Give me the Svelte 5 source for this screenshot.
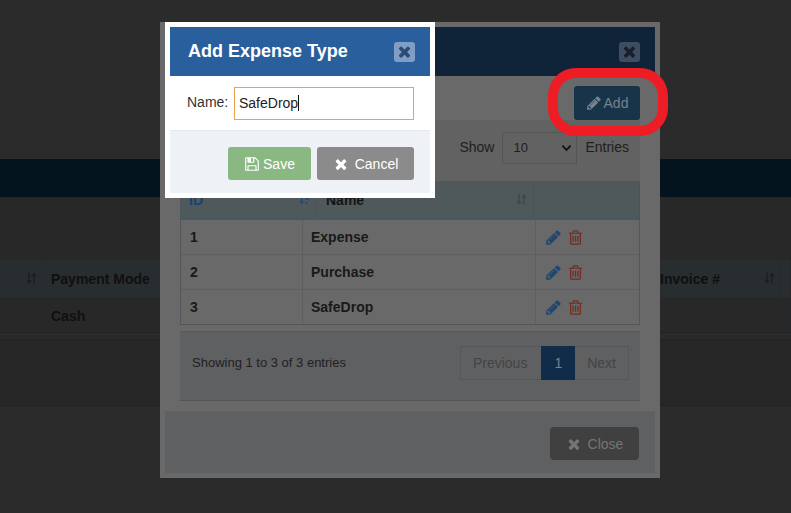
<script>
  const rows = [
    { id: 1, name: 'Expense' },
    { id: 2, name: 'Purchase' },
    { id: 3, name: 'SafeDrop' }
  ];
  const pencil = 'M491 1536l91-91-235-235-91 91v107h128v128h107zm523-928q0-22-22-22-10 0-17 7l-542 542q-7 7-7 17 0 22 22 22 10 0 17-7l542-542q7-7 7-17zm-54-192l416 416-832 832h-416v-416zm683 96q0 53-37 90l-166 166-416-416 166-165q36-38 90-38 53 0 91 38l235 234q37 39 37 91z';
  const times = 'M1490 1322q0 40-28 68l-136 136q-28 28-68 28t-68-28l-294-294-294 294q-28 28-68 28t-68-28l-136-136q-28-28-28-68t28-68l294-294-294-294q-28-28-28-68t28-68l136-136q28-28 68-28t68 28l294 294 294-294q28-28 68-28t68 28l136 136q28 28 28 68t-28 68l-294 294 294 294q28 28 28 68z';
  const trash = 'M704 736v576q0 14-9 23t-23 9h-64q-14 0-23-9t-9-23v-576q0-14 9-23t23-9h64q14 0 23 9t9 23zm256 0v576q0 14-9 23t-23 9h-64q-14 0-23-9t-9-23v-576q0-14 9-23t23-9h64q14 0 23 9t9 23zm256 0v576q0 14-9 23t-23 9h-64q-14 0-23-9t-9-23v-576q0-14 9-23t23-9h64q14 0 23 9t9 23zm128 724v-948h-896v948q0 22 7 40.5t14.5 27 10.5 8.5h832q3 0 10.5-8.5t14.5-27 7-40.5zm-672-1076h448l-48-117q-7-9-17-11h-317q-10 2-17 11zm928 32v64q0 14-9 23t-23 9h-96v948q0 83-47 143.5t-113 60.5h-832q-66 0-113-58.5t-47-141.5v-952h-96q-14 0-23-9t-9-23v-64q0-14 9-23t23-9h309l70-167q15-37 54-63t79-26h320q40 0 79 26t54 63l70 167h309q14 0 23 9t9 23z';
  const save = 'M512 1536h768v-384h-768v384zm896 0h128v-896q0-14-10-38.5t-20-34.5l-281-281q-10-10-34-20t-39-10v416q0 40-28 68t-68 28h-576q-40 0-68-28t-28-68v-416h-128v1280h128v-416q0-40 28-68t68-28h832q40 0 68 28t28 68v416zm-384-928v-320q0-13-9.5-22.5t-22.5-9.5h-192q-13 0-22.5 9.5t-9.5 22.5v320q0 13 9.5 22.5t22.5 9.5h192q13 0 22.5-9.5t9.5-22.5zm640 32v928q0 40-28 68t-68 28h-1344q-40 0-68-28t-28-68v-1344q0-40 28-68t68-28h928q40 0 88 20t76 48l280 280q28 28 48 76t20 88z';
  const sortBoth = 'M4 1v9H1.500L5 14.500 8.500 10H6V1zM12 14.500V5.500h2.500L11 1 7.500 5.500H10v9z';
  const sortAsc = 'M3.500 1v9H1l3.500 4L8 10H5.500V1zM9 2h6v1.800H9zM9 6.500h4.500v1.800H9zM9 11h3v1.800H9z';
</script>

<div class="page">
  <div class="top"></div>
  <div class="bar"></div>
  <div class="gap"></div>
  <div class="bg-head">
    <div class="bg-cell first"><svg class="sort" viewBox="0 0 16 16"><path d={sortBoth} /></svg></div>
    <div class="bg-cell wide">Payment Mode</div>
    <div class="bg-cell inv">Invoice #<svg class="sort" viewBox="0 0 16 16"><path d={sortBoth} /></svg></div>
    <div class="bg-cell"></div>
  </div>
  <div class="bg-row">
    <div class="bg-cell first"></div>
    <div class="bg-cell wide">Cash</div>
    <div class="bg-cell inv"></div>
    <div class="bg-cell"></div>
  </div>
  <div class="bg-foot"></div>
  <div class="bg-end"></div>

  <div class="modal list-modal">
    <div class="m-head">
      <span></span>
      <button class="x x-dim"><svg viewBox="0 0 1792 1792"><path d={times} /></svg></button>
    </div>
    <div class="add-row">
      <button class="btn add"><svg viewBox="0 0 1792 1792"><path d={pencil} /></svg>Add</button>
    </div>
    <div class="panel">
      <div class="len">
        <span>Show</span>
        <div class="sel">10<svg viewBox="0 0 12 8"><path d="M1.500 1.500 6 6l4.500-4.500" /></svg></div>
        <span>Entries</span>
      </div>
      <div class="thead">
        <div class="th id">ID<svg class="sort asc" viewBox="0 0 16 16"><path d={sortAsc} /></svg></div>
        <div class="th nm">Name<svg class="sort" viewBox="0 0 16 16"><path d={sortBoth} /></svg></div>
        <div class="th"></div>
      </div>
      <div class="tbody">
        {#each rows as r}
          <div class="tr">
            <div class="td">{r.id}</div>
            <div class="td">{r.name}</div>
            <div class="td acts">
              <svg class="ed" viewBox="0 0 1792 1792"><path d={pencil} /></svg>
              <svg class="del" viewBox="0 0 1792 1792"><path d={trash} /></svg>
            </div>
          </div>
        {/each}
      </div>
      <div class="tfoot">
        <span class="info">Showing 1 to 3 of 3 entries</span>
        <div class="pager">
          <span class="pg">Previous</span>
          <span class="pg cur">1</span>
          <span class="pg">Next</span>
        </div>
      </div>
    </div>
    <div class="m-foot">
      <button class="btn close"><svg viewBox="0 0 1792 1792"><path d={times} /></svg>Close</button>
    </div>
  </div>

  <div class="ring"></div>

  <div class="modal add-modal">
    <div class="a-head">
      <span>Add Expense Type</span>
      <button class="x"><svg viewBox="0 0 1792 1792"><path d={times} /></svg></button>
    </div>
    <div class="a-body">
      <label for="nm">Name:</label>
      <div id="nm" class="input">SafeDrop<i></i></div>
    </div>
    <div class="a-foot">
      <button class="btn sv"><svg viewBox="0 0 1792 1792"><path d={save} /></svg>Save</button>
      <button class="btn cn"><svg viewBox="0 0 1792 1792"><path d={times} /></svg>Cancel</button>
    </div>
  </div>
</div>

<style>
  :global(body) {
    margin: 0;
    background: #2b2b2b;
  }
  .page {
    position: relative;
    width: 791px;
    height: 513px;
    overflow: hidden;
    background: #2b2b2b;
    font-family: "Liberation Sans", Arial, sans-serif;
    font-size: 14px;
  }
  button {
    font: inherit;
    cursor: pointer;
  }
  .top { height: 159px; background: #2b2b2b; }
  .bar { height: 38px; background: #03141f; }
  .gap { height: 63px; background: #282828; }
  .bg-head, .bg-row {
    display: grid;
    grid-template-columns: 43px 1fr 1fr 10px;
    box-sizing: border-box;
  }
  .bg-head {
    height: 38px;
    background: #282d2f;
    border-bottom: 1px solid #252b2d;
    font-weight: 700;
    color: #101010;
  }
  .bg-row {
    height: 35px;
    background: #282828;
    border-bottom: 1px solid #222;
    font-weight: 700;
    color: #101010;
    padding-top: 1px;
  }
  .bg-cell {
    display: flex;
    align-items: center;
    justify-content: space-between;
    padding-left: 8px;
    border-right: 1px solid #262a2c;
  }
  .bg-cell.first { padding-left: 0; justify-content: flex-end; padding-right: 4px; }
  .bg-cell.inv { justify-content: space-between; padding: 0 4px 0 248px; }
  .bg-cell .sort { width: 13px; height: 13px; fill: #1b2022; }
  .bg-foot { height: 6px; background: #2a2a2a; border-bottom: 1px solid #222; }
  .bg-end { height: 65px; background: #272727; border-bottom: 1px solid #222; }

  .modal {
    position: absolute;
    box-sizing: border-box;
    display: flex;
    flex-direction: column;
  }
  .list-modal {
    left: 160px;
    top: 22px;
    width: 500px;
    height: 456px;
    padding: 5px;
    background: #696969;
  }
  .m-head {
    flex: none;
    height: 49px;
    background: #0f2439;
    display: flex;
    justify-content: flex-end;
    align-items: center;
    padding: 0 15px 0 0;
  }
  .x {
    width: 21px;
    height: 20px;
    padding: 0;
    border: 0;
    border-radius: 3px;
    background: #7f9dc5;
    display: flex;
    align-items: center;
    justify-content: center;
  }
  .x svg { width: 17px; height: 17px; fill: #2c4a73; }
  .x-dim { background: #3f4d60; }
  .x-dim svg { fill: #181f2c; }
  .add-row {
    flex: none;
    height: 44px;
    background: #696969;
    display: flex;
    justify-content: flex-end;
    padding: 10px 15px 0 0;
    box-sizing: border-box;
  }
  .btn {
    display: inline-flex;
    align-items: center;
    justify-content: center;
    border: 0;
    border-radius: 3px;
    font-size: 14px;
  }
  .btn svg { fill: currentColor; }
  .add {
    width: 66px;
    height: 34px;
    background: #173449;
    color: #76828e;
    gap: 2px;
  }
  .add svg { width: 16px; height: 16px; }
  .panel {
    flex: none;
    margin: 0 15px;
    height: 281px;
    border-bottom: 1px solid #545556;
    box-sizing: border-box;
    display: flex;
    flex-direction: column;
  }
  .len {
    flex: none;
    height: 61px;
    display: flex;
    justify-content: flex-end;
    align-items: flex-start;
    gap: 8px;
    padding: 12px 11px 0 0;
    box-sizing: border-box;
    color: #1e1e1e;
    line-height: 30px;
    background: #626262;
  }
  .sel {
    width: 75px;
    height: 32px;
    box-sizing: border-box;
    border: 1px solid #555;
    display: flex;
    justify-content: space-between;
    align-items: center;
    padding: 0 4px 0 10px;
    font-size: 13px;
    color: #1e1e1e;
  }
  .sel svg { width: 11px; height: 8px; fill: none; stroke: #111; stroke-width: 2; }
  .thead {
    flex: none;
    height: 39px;
    display: grid;
    grid-template-columns: 137px 217px 1fr;
    background: #4f585b;
    border-bottom: 2px solid #475865;
    box-sizing: border-box;
    font-weight: 700;
  }
  .th {
    display: flex;
    align-items: center;
    justify-content: space-between;
    padding: 0 5px 0 9px;
    border-right: 1px solid #4b5457;
    color: #151515;
  }
  .th.id { color: #1a4470; }
  .th .sort { width: 13px; height: 13px; fill: #40484b; }
  .th .sort.asc { fill: #214b78; }
  .tbody {
    flex: none;
    border: 1px solid #565656;
    border-top: 0;
    background: #696969;
  }
  .tr {
    display: grid;
    grid-template-columns: 122px 233px 1fr;
    height: 35px;
    box-sizing: border-box;
    border-bottom: 1px solid #5f5f5f;
  }
  .tr:last-child { border-bottom: 0; height: 34px; }
  .td {
    display: flex;
    align-items: center;
    padding-left: 9px;
    font-weight: 700;
    color: #191919;
    border-right: 1px solid #5f5f5f;
  }
  .td:nth-child(2) { padding-left: 8px; }
  .td:last-child { border-right: 0; }
  .ed { width: 17px; height: 17px; fill: #204670; }
  .del { width: 17px; height: 17px; fill: #742a20; margin-left: 5px; }
  .tfoot {
    flex: 1;
    margin-top: 6px;
    background: #5f6062;
    border-top: 1px solid #585859;
    padding: 14px 11px 0 12px;
    display: flex;
    justify-content: space-between;
    align-items: flex-start;
  }
  .info { font-size: 13px; color: #1f1f1f; line-height: 33px; }
  .pager {
    display: flex;
    border: 1px solid #565758;
    height: 34px;
    box-sizing: border-box;
  }
  .pg {
    padding: 0 12px;
    display: flex;
    align-items: center;
    color: #444;
  }
  .pg:first-child { padding-right: 14px; }
  .pg.cur {
    background: #112c48;
    color: #76828e;
    margin: -1px 0;
    padding: 0 13px;
    height: 34px;
  }
  .m-foot {
    flex: none;
    margin-top: 10px;
    height: 62px;
    background: #5f6062;
    display: flex;
    justify-content: flex-end;
    padding: 16px 16px 0 0;
    box-sizing: border-box;
  }
  .close {
    width: 89px;
    height: 33px;
    background: #404040;
    color: #757575;
    gap: 6px;
    border-radius: 4px;
  }
  .close svg { width: 16px; height: 16px; }
  .ring {
    position: absolute;
    left: 548px;
    top: 68px;
    width: 120px;
    height: 68px;
    box-sizing: border-box;
    border: 10px solid #ee1c25;
    border-radius: 28px;
  }
  .add-modal {
    left: 165px;
    top: 22px;
    width: 270px;
    height: 176px;
    padding: 5px;
    background: #fff;
  }
  .a-head {
    flex: none;
    height: 49px;
    background: #2a5f9e;
    color: #fff;
    font-size: 18px;
    font-weight: 700;
    display: flex;
    align-items: center;
    justify-content: space-between;
    padding: 0 15px 0 18px;
  }
  .a-body {
    flex: none;
    height: 55px;
    display: flex;
    align-items: flex-start;
    padding: 11px 16px 0 17px;
    box-sizing: border-box;
    border-bottom: 1px solid #e5e9f0;
    color: #333;
  }
  .a-body label { width: 47px; line-height: 30px; }
  .input {
    flex: 1;
    height: 33px;
    box-sizing: border-box;
    border: 1px solid #f0a04b;
    padding: 0 4px 2px;
    display: flex;
    align-items: center;
    color: #222;
  }
  .input i { width: 1px; height: 16px; background: #111; }
  .a-foot {
    flex: 1;
    background: #eef1f6;
    display: flex;
    justify-content: flex-end;
    gap: 6px;
    padding: 16px 16px 0 0;
    box-sizing: border-box;
  }
  .sv, .cn {
    height: 33px;
    color: #fff;
    border-radius: 3px;
  }
  .sv { width: 83px; background: #8ab882; gap: 3px; }
  .cn { width: 97px; background: #8b8b8b; gap: 6px; }
  .sv svg { width: 16px; height: 16px; }
  .cn svg { width: 16px; height: 16px; }
</style>
